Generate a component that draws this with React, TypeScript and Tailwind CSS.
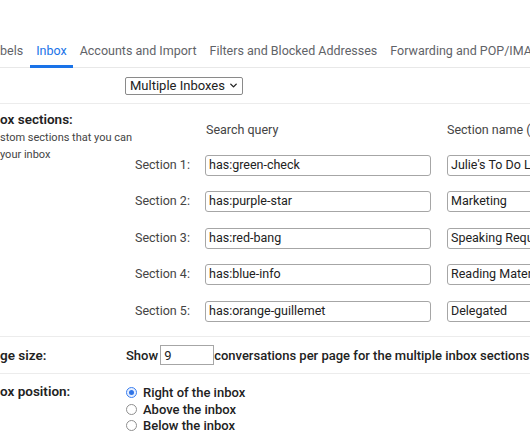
import { ChevronDown } from 'lucide-react';

const tabs = ['bels', 'Inbox', 'Accounts and Import', 'Filters and Blocked Addresses', 'Forwarding and POP/IMAP'];

const sections = [
  { query: 'has:green-check', name: "Julie's To Do List" },
  { query: 'has:purple-star', name: 'Marketing' },
  { query: 'has:red-bang', name: 'Speaking Requests' },
  { query: 'has:blue-info', name: 'Reading Material' },
  { query: 'has:orange-guillemet', name: 'Delegated' },
];

const positions = ['Right of the inbox', 'Above the inbox', 'Below the inbox'];

function Radio({ checked }: { checked?: boolean }) {
  return checked ? (
    <span className="flex h-[11px] w-[11px] items-center justify-center rounded-full border border-[#3b7ff0] bg-[#e6efff]">
      <span className="h-[5px] w-[5px] rounded-full bg-[#2f73e6]" />
    </span>
  ) : (
    <span className="h-[11px] w-[11px] rounded-full border border-[#8f8f8f] bg-white" />
  );
}

export default function App() {
  return (
    <div
      className="h-[442px] w-[530px] overflow-hidden bg-white text-[13px] text-[#222]"
      style={{ fontFamily: 'Roboto, "Liberation Sans", Arial, sans-serif' }}
    >
      {/* Tabs */}
      <div className="flex h-[68px] items-end whitespace-nowrap border-b border-[#e8e8e8]">
        {tabs.map((t, i) => (
          <div
            key={t}
            className={`relative pb-[8px] text-[12.5px] leading-4 ${i === 0 ? 'pr-[6.5px]' : 'px-[6.5px]'} ${
              t === 'Inbox' ? 'text-[#1a73e8]' : 'text-[#5f6368]'
            }`}
          >
            {t}
            {t === 'Inbox' && <span className="absolute bottom-[-1px] left-0 right-0 h-[3px] bg-[#1a73e8]" />}
          </div>
        ))}
      </div>

      {/* Inbox type */}
      <div className="flex h-[36px] items-center border-b border-[#ececec] pl-[125px]">
        <div className="flex h-[18px] items-center gap-[3px] rounded-[2px] border border-[#8a8a8a] pl-[4px] pr-[3px] text-[13px] leading-4">
          Multiple Inboxes
          <ChevronDown size={11} strokeWidth={3} />
        </div>
      </div>

      {/* Sections */}
      <div className="flex border-b border-[#ececec] pb-[14px]">
        <div className="w-[125px] shrink-0 pt-[7px] whitespace-nowrap">
          <div className="text-[13.5px] font-semibold leading-4">ox sections:</div>
          <div className="mt-[2px] text-[11px] leading-[17px] text-[#444]">
            <div>stom sections that you can</div>
            <div>your inbox</div>
          </div>
        </div>
        <div className="flex-1 pt-[17px] text-[12.5px]">
          <div className="grid grid-cols-[64px_226px_1fr] items-center gap-x-[16px] whitespace-nowrap">
            <div />
            <div className="pl-[1px] text-[#444]">Search query</div>
            <div className="text-[#444]">Section name (optional)</div>
          </div>
          <div className="mt-[15px] flex flex-col gap-[15.5px]">
            {sections.map((s, i) => (
              <div key={s.query} className="grid grid-cols-[64px_226px_120px] items-center gap-x-[16px] whitespace-nowrap">
                <div className="pl-[10px] text-[#444]">Section {i + 1}:</div>
                <div className="flex h-[21px] items-center rounded-[3px] border border-[#a6a6a6] px-[3px]">{s.query}</div>
                <div className="flex h-[21px] w-[160px] items-center overflow-hidden rounded-[3px] border border-[#a6a6a6] px-[3px]">
                  {s.name}
                </div>
              </div>
            ))}
          </div>
        </div>
      </div>

      {/* Page size */}
      <div className="flex h-[37px] items-center border-b border-[#ececec] whitespace-nowrap pt-[1px]">
        <div className="w-[126px] shrink-0 text-[13.5px] font-semibold">ge size:</div>
        <span className="font-medium">Show</span>
        <span className="ml-[2px] flex h-[20px] w-[54px] items-center border border-[#a6a6a6] pl-[3px]">9</span>
        <span className="font-medium">conversations per page for the multiple inbox sections</span>
      </div>

      {/* Position */}
      <div className="flex pt-[9px] whitespace-nowrap">
        <div className="w-[126px] shrink-0 text-[13.5px] font-semibold leading-4">ox position:</div>
        <div className="flex flex-col gap-[0.5px] pt-[2px]">
          {positions.map((p, i) => (
            <label key={p} className="flex h-[16px] items-center gap-[6px] font-medium">
              <Radio checked={i === 0} />
              {p}
            </label>
          ))}
        </div>
      </div>
    </div>
  );
}
